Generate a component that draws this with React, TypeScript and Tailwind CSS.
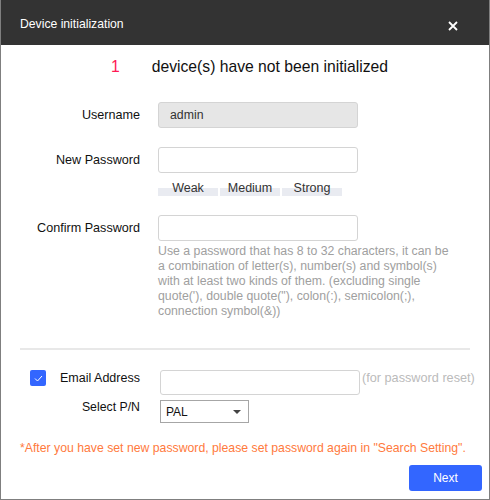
import React from 'react';

const strengthLevels = ['Weak', 'Medium', 'Strong'];

const FieldRow: React.FC<{ label: string; children: React.ReactNode; className?: string }> = ({ label, children, className }) => (
    <div className={`flex items-center ${className ?? ''}`}>
        <div className="w-[139px] text-right text-[12.6px] text-[#111]">{label}</div>
        <div className="ml-[18px]">{children}</div>
    </div>
);

export default function App() {
    return (
        <div className="w-[490px] h-[500px] bg-white border-x border-b border-[#7f7f7f] flex flex-col text-[12px] text-[#222] [font-family:'Liberation_Sans',Arial,sans-serif]">
            {/* title bar */}
            <div className="h-[45px] shrink-0 bg-[#333333] flex items-center justify-between pl-[19px] pr-[31px] pt-[4px] text-white text-[12.2px]">
                <span>Device initialization</span>
                <svg width="10" height="10" viewBox="0 0 10 10" className="mt-[2px]">
                    <path d="M1 1 L9 9 M9 1 L1 9" stroke="#fff" strokeWidth="1.8" />
                </svg>
            </div>

            <div className="h-[44px] flex items-center text-[15.7px]">
                <span className="ml-[110px] text-[#ff1a55]">1</span>
                <span className="ml-[32px] text-[#111]">device(s) have not been initialized</span>
            </div>

            <FieldRow label="Username" className="mt-[13px]">
                <div className="w-[200px] h-[26px] rounded-[3px] border border-[#d4d4d4] bg-[#e6e6e6] px-[11px] flex items-center text-[12.3px] text-[#333]">
                    admin
                </div>
            </FieldRow>

            <FieldRow label="New Password" className="mt-[19px]">
                <div className="w-[200px] h-[26px] rounded-[3px] border border-[#d4d4d4] bg-white" />
            </FieldRow>

            <div className="mt-[15px] ml-[157px] flex gap-[2px] text-[12.5px]">
                {strengthLevels.map((lvl) => (
                    <div key={lvl} className="w-[60px] h-[8px] bg-[#e9ebf1]">
                        <span className="block -mt-[7px] leading-[14px] text-center text-[#333]">{lvl}</span>
                    </div>
                ))}
            </div>

            <FieldRow label="Confirm Password" className="mt-[19px]">
                <div className="w-[200px] h-[26px] rounded-[3px] border border-[#d4d4d4] bg-white" />
            </FieldRow>

            <p className="mt-[3px] ml-[157px] w-[296px] leading-[15px] text-[12.3px] text-[#a0a0a0]">
                Use a password that has 8 to 32 characters, it can be a combination of letter(s), number(s) and symbol(s) with at least two kinds of them. (excluding single quote('), double quote("), colon(:), semicolon(;), connection symbol(&))
            </p>

            <div className="mt-[29px] mx-[19px] h-[2px] bg-[#e8e8e8]" />

            {/* email row */}
            <div className="mt-[20px] flex items-start">
                <div className="w-[139px] h-[16px] flex items-center">
                    <div className="ml-[29px] w-[16px] h-[16px] rounded-[2px] bg-[#3366ff] flex items-center justify-center">
                        <svg width="9" height="7" viewBox="0 0 9 7">
                            <path d="M1 3.5 L3.5 6 L8 1" stroke="#fff" strokeWidth="1" fill="none" />
                        </svg>
                    </div>
                    <span className="ml-[14px] text-[12.5px] text-[#111]">Email Address</span>
                </div>
                <div className="ml-[20px] w-[200px] h-[25px] rounded-[3px] border border-[#d4d4d4] bg-white" />
                <span className="ml-[2px] leading-[16px] text-[12.7px] text-[#bbbbbb]">(for password reset)</span>
            </div>

            <div className="mt-[5px] flex items-start">
                <div className="w-[139px] text-right leading-[16px] -mt-[1px] text-[12.3px] text-[#111]">Select P/N</div>
                <div className="ml-[20px] w-[89px] h-[23px] border border-[#a6a6a6] flex items-center justify-between pl-[5px] pr-[7px] text-[#111]">
                    <span>PAL</span>
                    <svg width="8" height="4" viewBox="0 0 8 4">
                        <path d="M0 0 L8 0 L4 4 Z" fill="#444" />
                    </svg>
                </div>
            </div>

            <p className="mt-[17px] ml-[19px] leading-[16px] text-[12.25px] text-[#ff7a3d]">
                *After you have set new password, please set password again in "Search Setting".
            </p>

            <div className="mt-[9px] flex justify-end pr-[7px]">
                <button className="w-[73px] h-[26px] rounded-[3px] bg-[#3366ff] text-white text-[12px]">Next</button>
            </div>
        </div>
    );
}
